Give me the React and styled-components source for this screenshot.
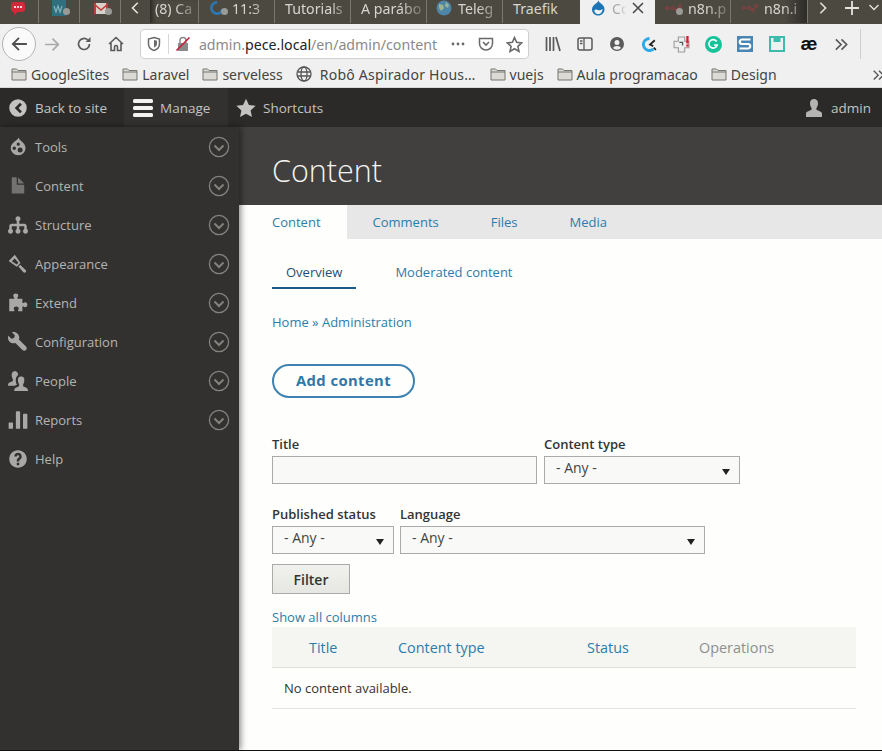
import React from 'react'
import styled, { createGlobalStyle } from 'styled-components'

const GlobalStyle = createGlobalStyle`
	html, body {
		margin: 0;
		padding: 0;
		background: #fefefc;
	}
	* {
		box-sizing: border-box;
	}
`

const Page = styled.div`
	width: 882px;
	height: 751px;
	overflow: hidden;
	display: flex;
	flex-direction: column;
	border-bottom: 1px solid #111;
	font-family: 'Open Sans', 'Liberation Sans', sans-serif;
	background: #fefefc;
`

/* browser chrome */
const TabStrip = styled.div`
	height: 24px;
	flex: none;
	display: flex;
	background: #4c4940;
	font-family: 'Noto Sans', sans-serif;
	font-size: 14.2px;
	color: #d6d4cd;
	overflow: hidden;
`
const Tab = styled.div`
	width: ${p => p.$w}px;
	flex: none;
	height: ${p => (p.$active ? 24 : 23)}px;
	display: flex;
	align-items: center;
	gap: 6px;
	padding: 0 0 ${p => (p.$active ? 8 : 7)}px ${p => p.$pad ?? 8}px;
	white-space: nowrap;
	background: ${p =>
		p.$active ? '#f0f0f0' : p.$shade ? 'linear-gradient(to right, transparent 70%, #2e2c28)' : 'transparent'};
	color: ${p => (p.$active ? '#a8a8a8' : 'inherit')};
	border-right: ${p => (p.$active || p.$noline ? 'none' : '1px solid #7b786f')};
	box-shadow: ${p => (p.$edge ? 'inset 5px 0 4px -3px #26241f' : 'none')};
`
const TabLabel = styled.span`
	flex: 1;
	min-width: 0;
	mask-image: linear-gradient(to right, #000 ${p => p.$from ?? 45}%, rgba(0, 0, 0, 0.15) 100%);
`
const TabControl = styled.div`
	flex: none;
	width: ${p => p.$w}px;
	height: 23px;
	padding-bottom: 7px;
	display: flex;
	align-items: center;
	justify-content: center;
	color: #e6e4dd;
`

const NavBar = styled.div`
	height: 37px;
	flex: none;
	display: flex;
	align-items: center;
	background: #f0f0f0;
	color: #5a5a5a;
	padding: 3px 0 0 2px;
`
const BackButton = styled.div`
	width: 34px;
	height: 34px;
	flex: none;
	border-radius: 50%;
	background: #fafafa;
	border: 1px solid #b4b4b4;
	display: flex;
	align-items: center;
	justify-content: center;
	color: #4f4f4f;
`
const NavIcon = styled.div`
	width: 32px;
	flex: none;
	display: flex;
	align-items: center;
	justify-content: center;
	color: ${p => p.$color ?? 'inherit'};
`
const UrlBar = styled.div`
	width: 389px;
	height: 30px;
	flex: none;
	margin: 0 8px;
	display: flex;
	align-items: center;
	background: #fff;
	border: 1px solid #cfcfcf;
	border-radius: 4px;
	padding-left: 5px;
	font-family: 'Noto Sans', sans-serif;
	font-size: 14.2px;
	color: #8a8a8a;
`
const UrlDivider = styled.span`
	width: 1px;
	height: 20px;
	background: #d6d6d6;
	margin: 0 6px;
`
const UrlText = styled.div`
	margin-left: 8px;
	width: 246px;
	white-space: nowrap;
	strong {
		font-weight: 400;
		color: #222;
	}
`
const UrlAction = styled.div`
	width: 28px;
	flex: none;
	display: flex;
	justify-content: center;
	color: #6a6a6a;
`
const ToolDivider = styled.span`
	width: 1px;
	height: 30px;
	flex: none;
	background: #cfcfcf;
	margin-left: 3px;
`
const AeGlyph = styled.span`
	font-family: 'Liberation Sans', sans-serif;
	font-size: 19px;
	font-weight: 700;
	line-height: 16px;
	color: #111;
`

const BookmarkBar = styled.div`
	height: 27px;
	flex: none;
	display: flex;
	align-items: center;
	background: #f0f0f0;
	border-bottom: 1px solid #d8d8d8;
	padding-left: 11px;
	gap: 13px;
	font-family: 'Noto Sans', sans-serif;
	font-size: 14px;
	color: #444;
	position: relative;
`
const Bookmark = styled.div`
	display: flex;
	align-items: center;
	gap: ${p => p.$gap ?? 4}px;
	margin-right: ${p => p.$after ?? 0}px;
	letter-spacing: ${p => p.$spacing ?? 0}px;
	white-space: nowrap;
`
const BookmarkMore = styled.div`
	position: absolute;
	right: -4px;
	top: 7px;
	color: #555;
`

/* drupal toolbar */
const Toolbar = styled.div`
	height: 39px;
	flex: none;
	display: flex;
	align-items: stretch;
	background: #2b2a28;
	font-size: 13.5px;
	color: #c4c3c2;
`
const ToolbarItem = styled.div`
	display: flex;
	align-items: center;
	gap: ${p => p.$gap ?? 7}px;
	width: ${p => (p.$w ? `${p.$w}px` : 'auto')};
	padding: 0 ${p => p.$right ?? 17}px 0 ${p => p.$left ?? 8}px;
	background: ${p => (p.$active ? '#32312f' : 'transparent')};
	margin-left: ${p => (p.$push ? 'auto' : 0)};
`

const Body = styled.div`
	flex: 1;
	min-height: 0;
	display: flex;
`
const Sidebar = styled.nav`
	width: 239px;
	flex: none;
	background: #32312f;
	box-shadow: 2px 0 6px rgba(0, 0, 0, 0.45);
	position: relative;
	z-index: 2;
`
const SideRow = styled.div`
	height: 39px;
	display: flex;
	align-items: center;
	padding: 0 9px 0 8px;
	gap: 7px;
	font-size: 13px;
	color: #b5b4b2;
`
const SideIcon = styled.span`
	flex: none;
	display: flex;
	color: ${p => (p.$dim ? '#737270' : '#a9a8a6')};
`
const SideLabel = styled.span`
	flex: 1;
`

const Main = styled.main`
	flex: 1;
	min-width: 0;
`
const PageHeader = styled.header`
	height: 78px;
	padding: 8px 0 0 33px;
	display: flex;
	align-items: center;
	background: #42403e;
`
const PageTitle = styled.h1`
	margin: 0;
	font-size: 30.500px;
	font-weight: 300;
	color: #f5f5f2;
`
const PrimaryTabs = styled.div`
	height: 34px;
	display: flex;
	background: #e7e7e7;
`
const PrimaryTab = styled.a`
	display: flex;
	align-items: center;
	padding: 0 26px 0 ${p => (p.$active ? 33 : 26)}px;
	font-size: 13px;
	color: #2d7cab;
	background: ${p => (p.$active ? '#fefefc' : 'transparent')};
`
const Content = styled.div`
	padding: 16px 26px 0 33px;
`
const SecondaryTabs = styled.div`
	display: flex;
	gap: 25px;
`
const SecondaryTab = styled.a`
	height: 34px;
	display: flex;
	align-items: center;
	padding: 2px 14px 0;
	font-size: 13px;
	color: ${p => (p.$active ? '#1f4f6e' : '#2d7cab')};
	border-bottom: 2px solid ${p => (p.$active ? '#1a5c85' : 'transparent')};
`
const Breadcrumb = styled.div`
	margin-top: 23px;
	line-height: 20px;
	font-size: 13px;
	color: #2d7cab;
`
const AddButton = styled.a`
	margin-top: 32px;
	width: 143px;
	height: 34px;
	display: flex;
	align-items: center;
	justify-content: center;
	padding-bottom: 2px;
	border: 2px solid #3d82b1;
	border-radius: 17px;
	font-size: 14.800px;
	font-weight: 700;
	letter-spacing: 0.4px;
	color: #3077a8;
`
const FormRow = styled.div`
	margin-top: ${p => p.$top}px;
	display: flex;
	gap: ${p => p.$gap}px;
`
const Field = styled.div`
	width: ${p => p.$w}px;
	flex: none;
`
const FieldLabel = styled.label`
	display: block;
	height: 20px;
	margin-top: ${p => p.$top ?? 0}px;
	line-height: 17px;
	font-size: 13px;
	font-weight: 600;
	color: #333;
	white-space: nowrap;
`
const TextInput = styled.div`
	height: 28px;
	background: #f9faf8;
	border: 1px solid #aaa;
`
const SelectBox = styled.div`
	position: relative;
	height: 28px;
	padding-left: 11px;
	line-height: 21px;
	font-size: 14px;
	color: #444;
	background: #f9faf8;
	border: 1px solid #aaa;
	&::after {
		content: '';
		position: absolute;
		right: 9px;
		top: 12px;
		border-style: solid;
		border-width: 6px 4px 0;
		border-color: #222 transparent transparent;
	}
`
const FilterButton = styled.div`
	margin-top: 10px;
	width: 78px;
	height: 30px;
	display: flex;
	align-items: center;
	justify-content: center;
	background: linear-gradient(#f1f1ee, #e6e6e3);
	border: 1px solid #aaa;
	font-size: 14px;
	font-weight: 600;
	color: #333;
`
const ShowColumns = styled.a`
	display: block;
	margin-top: 14px;
	line-height: 19px;
	font-size: 13px;
	color: #2d7cab;
`
const TableHead = styled.div`
	height: 41px;
	display: grid;
	grid-template-columns: 89px 189px 112px 1fr;
	align-items: center;
	padding-left: 37px;
	background: #f5f5f2;
	border-bottom: 1px solid #e0e0dc;
	font-size: 14.400px;
`
const HeadCell = styled.span`
	color: ${p => (p.$muted ? '#8f8f8d' : '#2d7cab')};
`
const EmptyRow = styled.div`
	height: 41px;
	display: flex;
	align-items: center;
	padding-left: 12px;
	border-bottom: 1px solid #e4e4e1;
	font-size: 13px;
	color: #333;
`

const Svg = ({ size = 16, box = 16, children, ...rest }) => (
	<svg width={size} height={size} viewBox={`0 0 ${box} ${box}`} fill="currentColor" {...rest}>
		{children}
	</svg>
)

const ICONS = {
	tools: (
		<path
			fillRule="evenodd"
			d="M8.500.4c.3 1.500 1.500 2.300 2.700 3.300 1.500 1.200 2.800 2.800 2.800 5 0 3-2.500 5.800-5.800 5.800S2.200 11.700 2.200 8.700c0-2.200 1.300-3.800 2.900-5C6.400 2.700 8.100 2 8.500.4zM8.200 4.400a1.300 1.300 0 1 0 0 2.600 1.300 1.300 0 0 0 0-2.600zM5 7.600a1.400 1.400 0 1 0 0 2.800 1.400 1.400 0 0 0 0-2.800zM9.700 8.300a2 2 0 1 0 0 4 2 2 0 0 0 0-4z"
		/>
	),
	file: (
		<path d="M12.502 7h-5c-.276 0-.502-.225-.502-.5v-5c0-.275-.225-.5-.5-.5h-3c-.275 0-.5.225-.5.5v12.029c0 .275.225.5.5.5h9.002c.275 0 .498-.225.498-.5v-6.029c0-.275-.225-.5-.498-.5zM8.502 6h4c.275 0 .34-.159.146-.354l-4.293-4.292c-.195-.195-.353-.129-.353.146v4c0 .275.225.5.5.5z" />
	),
	hierarchy: (
		<path d="M15.002 11.277v-2.277c0-1.103-.897-2-2-2h-4v-2.277c.596-.347 1-.984 1-1.723 0-1.104-.896-2-2-2s-2 .896-2 2c0 .738.404 1.376 1 1.723v2.277h-4c-1.103 0-2 .897-2 2v2.277c-.596.347-1 .984-1 1.723 0 1.104.896 2 2 2s2-.896 2-2c0-.738-.404-1.376-1-1.723v-2.277h4v2.277c-.596.347-1 .984-1 1.723 0 1.104.896 2 2 2s2-.896 2-2c0-.738-.404-1.376-1-1.723v-2.277h4v2.277c-.596.347-1 .984-1 1.723 0 1.104.896 2 2 2s2-.896 2-2c0-.738-.404-1.376-1-1.723z" />
	),
	brush: (
		<path
			fillRule="evenodd"
			d="M5.500.5L.5 5.500l6.500 4.700 3-3L5.500.5zM5.300 3.500L3.100 5.700l3.900 2.700 1.300-1.300-3-3.600zM9.700 8.700l-1.400 1.400 4 4.500c.5.500 1.300.5 1.800 0s.5-1.300 0-1.800l-4.400-4.100z"
		/>
	),
	puzzle: (
		<path d="M1 4.500h3.500c.6 0 .7-.5.4-.9-.4-.4-.7-.9-.7-1.500C4.200 1.100 5 .4 6.200.4s2 .7 2 1.700c0 .6-.3 1.100-.7 1.500-.3.4-.2.900.4.900H11.500v3c0 .5.500.7.900.4.400-.3.800-.6 1.300-.6 1 0 1.800.9 1.800 2s-.8 2-1.800 2c-.5 0-.9-.3-1.300-.6-.4-.3-.9-.1-.9.400v3.400H8.500c-.5 0-.6-.5-.4-.9.300-.4.500-.8.500-1.300 0-.9-.9-1.600-2-1.600s-2 .7-2 1.600c0 .5.200.900.500 1.300.2.400.1.900-.4.900H1V4.500z" />
	),
	wrench: (
		<path d="M14.416 11.586l-.01-.008v-.001l-5.656-5.656c.15-.449.252-.921.252-1.421 0-2.485-2.016-4.5-4.502-4.5-.505 0-.981.102-1.434.255l2.431 2.431-.588 2.196-2.196.588-2.445-2.445c-.162.464-.268.956-.268 1.475 0 2.485 2.015 4.5 4.5 4.500.5 0 .972-.102 1.421-.251l5.667 5.665c.781.781 2.047.781 2.828 0s.781-2.047 0-2.828z" />
	),
	people: (
		<path d="M6.722 11.291l.451-.17-.165-.32c-.536-1.039-.685-1.934-.761-2.672-.082-.808-.144-2.831 1.053-4.189.244-.278.493-.493.743-.675.012-.826-.135-1.766-.646-2.345-.618-.7-1.4-.787-1.4-.787l-.497-.055-.498.055s-.783.087-1.398.787c-.617.702-.717 1.948-.625 2.855.06.583.17 1.263.574 2.05.274.533.341.617.355 1.01.022.595.027 1.153-.671 1.538-.697.383-1.564.508-2.403 1.088-.596.41-.709 1.033-.78 1.459l-.051.41c-.029.273.173.498.448.498h5.012c.457-.24.89-.402 1.259-.537zM5.064 15.096c.07-.427.184-1.05.78-1.46.838-.581 1.708-.706 2.404-1.089.699-.385.693-.943.672-1.537-.014-.393-.08-.477-.354-1.01-.406-.787-.515-1.467-.576-2.049-.093-.909.008-2.155.625-2.856.615-.7 1.398-.787 1.398-.787l.492-.055h.002l.496.055s.781.087 1.396.787c.615.701.72 1.947.623 2.855-.062.583-.172 1.262-.571 2.049-.271.533-.341.617-.354 1.01-.021.595-.062 1.22.637 1.604.697.385 1.604.527 2.438 1.104.923.641.822 1.783.822 1.783-.022.275-.269.5-.542.5h-9.991c-.275 0-.477-.223-.448-.496l.051-.408z" />
	),
	bars: (
		<path d="M4 14.500c0 .276-.224.5-.5.5h-2.500c-.276 0-.5-.224-.5-.5v-4c0-.276.224-.5.5-.5h2.500c.276 0 .5.224.5.5v4zM9.700 14.500c0 .276-.224.5-.5.5h-2.400c-.276 0-.5-.224-.5-.5v-13c0-.276.224-.5.5-.5h2.400c.276 0 .5.224.5.5v13zM15.500 14.500c0 .276-.224.5-.5.5h-2.500c-.276 0-.5-.224-.5-.5v-11c0-.276.224-.5.5-.5h2.500c.276 0 .5.224.5.5v11z" />
	),
	help: (
		<path d="M8.002 1c-3.868 0-7.002 3.134-7.002 7s3.134 7 7.002 7c3.865 0 7-3.134 7-7s-3.135-7-7-7zm3 5c0 .551-.16 1.085-.477 1.586l-.158.22c-.07.093-.189.241-.361.393-.168.148-.35.299-.545.447l-.203.189-.141.129-.096.17-.021.235v.63h-2.001v-.704c.026-.396.078-.73.204-.999.125-.269.271-.498.439-.688l.225-.21-.01-.015.176-.14.137-.128c.186-.139.357-.277.516-.417l.148-.18c.098-.152.168-.323.168-.518 0-.552-.447-1-1-1s-1.002.448-1.002 1h-2c0-1.657 1.343-3 3.002-3 1.656 0 3 1.343 3 3zm-1.997 7h-2.001v-2h2.001v2z" />
	),
}

const MENU = [
	{ label: 'Tools', icon: 'tools', more: true },
	{ label: 'Content', icon: 'file', more: true, dim: true },
	{ label: 'Structure', icon: 'hierarchy', more: true },
	{ label: 'Appearance', icon: 'brush', more: true },
	{ label: 'Extend', icon: 'puzzle', more: true },
	{ label: 'Configuration', icon: 'wrench', more: true },
	{ label: 'People', icon: 'people', more: true },
	{ label: 'Reports', icon: 'bars', more: true },
	{ label: 'Help', icon: 'help' },
]

const Chevron = () => (
	<svg width="22" height="22" viewBox="0 0 22 22" fill="none" stroke="#83827f">
		<circle cx="11" cy="11" r="9.600" strokeWidth="1.300" />
		<path d="M6.500 9.500L11 14l4.500-4.500" strokeWidth="2" />
	</svg>
)

const Folder = () => (
	<Svg size={16}>
		<path d="M1 3h4.500l1.500 1.500h8V14H1z" fill="#dcdad6" stroke="#77756f" />
		<path d="M1 6h14" stroke="#77756f" fill="none" />
	</Svg>
)

const Globe = () => (
	<Svg size={16}>
		<g fill="none" stroke="#555" strokeWidth="1.300">
			<circle cx="8" cy="8" r="7" />
			<ellipse cx="8" cy="8" rx="3" ry="7" />
			<path d="M1.300 6h13.400M1.300 10h13.400" />
		</g>
	</Svg>
)

const DrupalDrop = ({ size = 16 }) => (
	<Svg size={size}>
		<path
			fill="#1b75b5"
			d="M8.500.5c.4 1.800 2.300 2.800 3.600 4C13.500 5.800 14.500 7.300 14.500 9.200c0 3.300-2.800 6.300-6.300 6.300S2 12.600 2 9.200C2 7 3.600 5.300 5.300 4 6.600 3 8 2.200 8.500.5z"
		/>
		<path
			fill="#f4f4f4"
			d="M4.300 10.300c1.700-1.900 3-.2 4.700 0 1.200.1 2.200-.6 3.500-1.300.2 2.500-1.700 5.200-4.300 5.200-2.300 0-3.900-1.700-3.900-3.900z"
		/>
	</Svg>
)

const DimDot = styled.span`
	width: 7px;
	height: 7px;
	border-radius: 50%;
	background: #9a9a96;
	margin-left: -${p => p.$back ?? 10}px;
	margin-right: ${p => p.$after ?? 0}px;
	margin-top: 7px;
	flex: none;
`

const ChatIcon = () => (
	<Svg size={16}>
		<rect x="1" y="2" width="14" height="10" rx="3" fill="#d3293a" />
		<path d="M4 11v4l4-3z" fill="#d3293a" />
		<circle cx="5" cy="7" r="1.100" fill="#fff" />
		<circle cx="8" cy="7" r="1.100" fill="#fff" />
		<circle cx="11" cy="7" r="1.100" fill="#fff" />
	</Svg>
)

const WixIcon = () => (
	<Svg size={16}>
		<rect x="1" y="0" width="14" height="16" fill="#2f6f7e" />
		<path d="M3 6l2 6 2-6 2 6 2-6" fill="none" stroke="#88b5bb" strokeWidth="1.200" />
	</Svg>
)

const MailIcon = () => (
	<Svg size={16}>
		<rect x="1" y="3" width="14" height="11" fill="#d8d2cb" />
		<path d="M1 3l7 6 7-6v2l-7 6-7-6z" fill="#c43f3a" />
		<path d="M1 3h2v11H1zM13 3h2v11h-2z" fill="#b9413c" />
	</Svg>
)

const SpinnerIcon = () => (
	<Svg size={16}>
		<path d="M8 1a7 7 0 1 0 7 8h-3a4.200 4.200 0 1 1-4-5.200z" fill="#2c78b4" />
	</Svg>
)

const GlobeFav = () => (
	<Svg size={16}>
		<circle cx="8" cy="8" r="7.500" fill="#4f86a8" />
		<path d="M3 4l4 1 1 3-3 3-2-3zM10 2l3 3-1 3-3-2z" fill="#9db58f" />
	</Svg>
)

const N8nIcon = () => (
	<svg width="17" height="10" viewBox="0 0 17 10" fill="none" stroke="#8f3f43" strokeWidth="1" style={{ flex: 'none' }}>
		<circle cx="2" cy="5" r="1.500" />
		<circle cx="8" cy="5" r="1.500" />
		<circle cx="12" cy="7" r="1.500" />
		<circle cx="15" cy="3" r="1.500" />
		<path d="M3.500 5h3M9.500 5l1 1M13 6l1-2" />
	</svg>
)

const TABS = [
	{ w: 39, icon: <ChatIcon />, pad: 10 },
	{ w: 41, icon: <><WixIcon /><DimDot /></>, pad: 12 },
	{ w: 41, icon: <><MailIcon /><DimDot /></>, pad: 13 },
]
const TABS_AFTER = [
	{ w: 49, label: '(8) Ca', pad: 5, edge: true },
	{ w: 76, icon: <><SpinnerIcon /><DimDot $after={-2} /></>, label: '11:3', pad: 10 },
	{ w: 76, label: 'Tutorials', pad: 10, from: 70 },
	{ w: 76, label: 'A parábo', pad: 10, from: 60 },
	{ w: 76, icon: <GlobeFav />, label: 'Teleg', pad: 9 },
	{ w: 77, label: 'Traefik', pad: 10, solid: true },
]

const Toolbutton = ({ children }) => <NavIcon>{children}</NavIcon>

export default function App() {
	return (
		<Page>
			<GlobalStyle />
			<TabStrip>
				{TABS.map((t, i) => (
					<Tab key={i} $w={t.w} $pad={t.pad}>
						{t.icon}
					</Tab>
				))}
				<TabControl $w={29}>
					<Svg size={14}>
						<path d="M10 2L4 8l6 6" fill="none" stroke="currentColor" strokeWidth="1.800" />
					</Svg>
				</TabControl>
				{TABS_AFTER.map(t => (
					<Tab key={t.label} $w={t.w} $pad={t.pad} $noline={t.solid} $edge={t.edge}>
						{t.icon}
						{t.solid ? t.label : <TabLabel $from={t.from}>{t.label}</TabLabel>}
					</Tab>
				))}
				<Tab $w={75} $active $pad={10}>
					<DrupalDrop />
					<TabLabel>Co</TabLabel>
					<svg width="12" height="12" viewBox="0 0 12 12" style={{ marginRight: 11 }}>
						<path d="M1 1l10 10M11 1L1 11" stroke="#4a4a4a" strokeWidth="1.600" />
					</svg>
				</Tab>
				<Tab $w={76} $pad={10}>
					<N8nIcon />
					<DimDot $back={12} $after={-1} />
					<TabLabel>n8n.p</TabLabel>
				</Tab>
				<Tab $w={77} $pad={10} $shade>
					<N8nIcon />
					<TabLabel>n8n.i</TabLabel>
				</Tab>
				<TabControl $w={30}>
					<Svg size={14}>
						<path d="M5 2l6 6-6 6" fill="none" stroke="currentColor" strokeWidth="1.800" />
					</Svg>
				</TabControl>
				<TabControl $w={28}>
					<Svg size={16}>
						<path d="M8 1v14M1 8h14" stroke="currentColor" strokeWidth="1.800" />
					</Svg>
				</TabControl>
				<TabControl $w={16}>
					<Svg size={12}>
						<path d="M2 4l6 6 6-6" fill="none" stroke="currentColor" strokeWidth="1.800" />
					</Svg>
				</TabControl>
			</TabStrip>

			<NavBar>
				<BackButton>
					<Svg size={18}>
						<path d="M8 2.500L2.500 8 8 13.500M3 8h12" fill="none" stroke="currentColor" strokeWidth="1.600" />
					</Svg>
				</BackButton>
				<NavIcon $color="#aaa">
					<Svg size={17}>
						<path d="M8 2.500L13.500 8 8 13.500M13 8H1" fill="none" stroke="currentColor" strokeWidth="1.600" />
					</Svg>
				</NavIcon>
				<NavIcon>
					<Svg size={16}>
						<path d="M13.500 8a5.500 5.500 0 1 1-1.800-4.100" fill="none" stroke="currentColor" strokeWidth="1.700" />
						<path d="M14.500 1v5h-5z" />
					</Svg>
				</NavIcon>
				<NavIcon>
					<Svg size={16}>
						<path d="M1 8l7-6.500L15 8M3 7v7.500h3.500V11a1.500 1.500 0 0 1 3 0v3.500H13V7" fill="none" stroke="currentColor" strokeWidth="1.600" />
					</Svg>
				</NavIcon>
				<UrlBar>
					<Svg size={16} style={{ color: '#6a6a6a' }}>
						<path d="M8 1.500l5.500 1.500v5c0 3.500-2.500 5.500-5.500 6.500C5 13.500 2.500 11.500 2.500 8V3z" fill="none" stroke="currentColor" strokeWidth="1.500" />
						<path d="M8 4l3 .8V8c0 1.800-1.500 3-3 3.600z" />
					</Svg>
					<UrlDivider />
					<Svg size={16}>
						<path d="M3 7h10v8H3z" fill="#8a8a8a" />
						<path d="M5 7V4.500a3 3 0 0 1 6 0V7" fill="none" stroke="#8a8a8a" strokeWidth="1.500" />
						<path d="M1.500 14.500L14.500 1.500" stroke="#c4213c" strokeWidth="1.700" />
					</Svg>
					<UrlText>
						admin.<strong>pece.local</strong>/en/admin/content
					</UrlText>
					<UrlAction>
						<Svg size={16}>
							<circle cx="3" cy="8" r="1.400" />
							<circle cx="8" cy="8" r="1.400" />
							<circle cx="13" cy="8" r="1.400" />
						</Svg>
					</UrlAction>
					<UrlAction>
						<Svg size={16}>
							<path d="M1.500 2.500h13v5a6.500 6.500 0 0 1-13 0z" fill="none" stroke="currentColor" strokeWidth="1.500" />
							<path d="M5 6l3 3 3-3" fill="none" stroke="currentColor" strokeWidth="1.600" />
						</Svg>
					</UrlAction>
					<UrlAction>
						<Svg size={17}>
							<path d="M8 1.500l2 4.500 4.800.5-3.600 3.200 1 4.800L8 12l-4.200 2.500 1-4.800L1.200 6.500 6 6z" fill="none" stroke="currentColor" strokeWidth="1.500" />
						</Svg>
					</UrlAction>
				</UrlBar>
				<Toolbutton>
					<Svg size={16}>
						<path d="M1.500 1v14M5 1v14M8.500 1v14M11 1l4 14" fill="none" stroke="currentColor" strokeWidth="1.700" />
					</Svg>
				</Toolbutton>
				<Toolbutton>
					<Svg size={16}>
						<rect x="1" y="2" width="14" height="12" rx="2" fill="none" stroke="currentColor" strokeWidth="1.500" />
						<path d="M7 2v12M3 5h2.500M3 7.500h2.500" stroke="currentColor" strokeWidth="1.300" />
					</Svg>
				</Toolbutton>
				<Toolbutton>
					<Svg size={16}>
						<path
							fillRule="evenodd"
							d="M8 1a7 7 0 1 1 0 14A7 7 0 0 1 8 1zm0 3a2.500 2.500 0 1 0 0 5 2.500 2.500 0 0 0 0-5zm0 6c-2 0-3.500.8-4 2a5.500 5.500 0 0 0 8 0c-.5-1.200-2-2-4-2z"
						/>
					</Svg>
				</Toolbutton>
				<Toolbutton>
					<Svg size={17}>
						<path d="M8 1a7 7 0 1 0 4.500 12.300l-1.800-2A4.300 4.300 0 1 1 8 3.700z" fill="#29a9e8" />
						<path d="M13 4L8.500 8l3 1.500M12 11l2 2" fill="none" stroke="#222" strokeWidth="1.700" />
					</Svg>
				</Toolbutton>
				<Toolbutton>
					<Svg size={17}>
						<path d="M5 1h6v4h4v6h-4v4H5v-4H1V5h4z" fill="#eee" stroke="#999" />
						<path d="M6 6h3v3" fill="none" stroke="#555" strokeWidth="1.200" />
						<rect x="12.500" y="0" width="2.200" height="7" fill="#d81d2b" />
						<rect x="12.500" y="8" width="2.200" height="2" fill="#d81d2b" />
					</Svg>
				</Toolbutton>
				<Toolbutton>
					<Svg size={17}>
						<circle cx="8" cy="8" r="8" fill="#15c39a" />
						<path d="M11 5.200a4 4 0 1 0 .5 3.300H8.500" fill="none" stroke="#fff" strokeWidth="1.500" />
					</Svg>
				</Toolbutton>
				<Toolbutton>
					<Svg size={16}>
						<rect width="16" height="16" fill="#4a86b3" />
						<path d="M13.500 3.500H5a2 2 0 0 0 0 4.500h6a2.200 2.200 0 0 1 0 4.500H2.500" fill="none" stroke="#fff" strokeWidth="2.200" />
					</Svg>
				</Toolbutton>
				<Toolbutton>
					<Svg size={16}>
						<rect x="1" y="1" width="14" height="14" fill="none" stroke="#3dbcae" strokeWidth="2" />
						<rect x="4.500" y="1" width="7" height="5" fill="#3dbcae" />
					</Svg>
				</Toolbutton>
				<NavIcon>
					<AeGlyph>æ</AeGlyph>
				</NavIcon>
				<Toolbutton>
					<Svg size={15}>
						<path d="M2 2.500L7.500 8 2 13.500M8 2.500L13.500 8 8 13.500" fill="none" stroke="currentColor" strokeWidth="1.800" />
					</Svg>
				</Toolbutton>
				<ToolDivider />
			</NavBar>

			<BookmarkBar>
				<Bookmark><Folder />GoogleSites</Bookmark>
				<Bookmark><Folder />Laravel</Bookmark>
				<Bookmark><Folder />serveless</Bookmark>
				<Bookmark $gap={8} $spacing={0.25} $after={1}><Globe />Robô Aspirador Hous…</Bookmark>
				<Bookmark><Folder />vuejs</Bookmark>
				<Bookmark><Folder />Aula programacao</Bookmark>
				<Bookmark><Folder />Design</Bookmark>
				<BookmarkMore>
					<Svg size={14}>
						<path d="M2 2l5 5-5 5M8 2l5 5-5 5" fill="none" stroke="currentColor" strokeWidth="1.600" />
					</Svg>
				</BookmarkMore>
			</BookmarkBar>

			<Toolbar>
				<ToolbarItem $w={124} $right={0}>
					<Svg size={20}>
						<path
							fillRule="evenodd"
							d="M8 1a7 7 0 1 1 0 14A7 7 0 0 1 8 1zm1.600 2.800L5.400 8l4.200 4.200 1.500-1.500L8.400 8l2.700-2.700z"
						/>
					</Svg>
					Back to site
				</ToolbarItem>
				<ToolbarItem $active $w={104} $left={9} $right={0}>
					<svg width="20" height="20" viewBox="0 0 20 20" fill="#f2f2f0">
						<rect y="1" width="20" height="4" rx="1.500" />
						<rect y="8" width="20" height="4" rx="1.500" />
						<rect y="15" width="20" height="4" rx="1.500" />
					</svg>
					Manage
				</ToolbarItem>
				<ToolbarItem>
					<Svg size={20} box={20}>
						<path d="M10 .8l2.900 6.200 6.700.8-5 4.600 1.400 6.700L10 15.700l-6 3.400 1.400-6.700-5-4.600 6.700-.8z" />
					</Svg>
					Shortcuts
				</ToolbarItem>
				<ToolbarItem $push $right={11} $gap={8}>
					<Svg size={18} box={18} style={{ color: '#b5b4b2' }}>
						<path d="M9 0c2.600 0 4 1.800 4 4.300 0 2-.8 3.500-1.500 4.700-.4.800-.2 1.700.8 2.200 1.800.8 4.700 1.400 4.700 3.300V18H1v-3.500c0-1.900 2.900-2.500 4.700-3.300 1-.5 1.200-1.400.8-2.200C5.800 7.800 5 6.300 5 4.300 5 1.800 6.400 0 9 0z" />
					</Svg>
					admin
				</ToolbarItem>
			</Toolbar>

			<Body>
				<Sidebar>
					{MENU.map(item => (
						<SideRow key={item.label}>
							<SideIcon $dim={item.dim}>
								<Svg size={20}>{ICONS[item.icon]}</Svg>
							</SideIcon>
							<SideLabel>{item.label}</SideLabel>
							{item.more && <Chevron />}
						</SideRow>
					))}
				</Sidebar>
				<Main>
					<PageHeader>
						<PageTitle>Content</PageTitle>
					</PageHeader>
					<PrimaryTabs>
						<PrimaryTab $active>Content</PrimaryTab>
						<PrimaryTab>Comments</PrimaryTab>
						<PrimaryTab>Files</PrimaryTab>
						<PrimaryTab>Media</PrimaryTab>
					</PrimaryTabs>
					<Content>
						<SecondaryTabs>
							<SecondaryTab $active>Overview</SecondaryTab>
							<SecondaryTab>Moderated content</SecondaryTab>
						</SecondaryTabs>
						<Breadcrumb>Home » Administration</Breadcrumb>
						<AddButton>Add content</AddButton>
						<FormRow $top={38} $gap={7}>
							<Field $w={265}>
								<FieldLabel>Title</FieldLabel>
								<TextInput />
							</Field>
							<Field $w={196}>
								<FieldLabel>Content type</FieldLabel>
								<SelectBox>- Any -</SelectBox>
							</Field>
						</FormRow>
						<FormRow $top={20} $gap={6}>
							<Field $w={122}>
								<FieldLabel $top={2}>Published status</FieldLabel>
								<SelectBox>- Any -</SelectBox>
							</Field>
							<Field $w={305}>
								<FieldLabel $top={2}>Language</FieldLabel>
								<SelectBox>- Any -</SelectBox>
							</Field>
						</FormRow>
						<FilterButton>Filter</FilterButton>
						<ShowColumns>Show all columns</ShowColumns>
						<TableHead>
							<HeadCell>Title</HeadCell>
							<HeadCell>Content type</HeadCell>
							<HeadCell>Status</HeadCell>
							<HeadCell $muted>Operations</HeadCell>
						</TableHead>
						<EmptyRow>No content available.</EmptyRow>
					</Content>
				</Main>
			</Body>
		</Page>
	)
}
